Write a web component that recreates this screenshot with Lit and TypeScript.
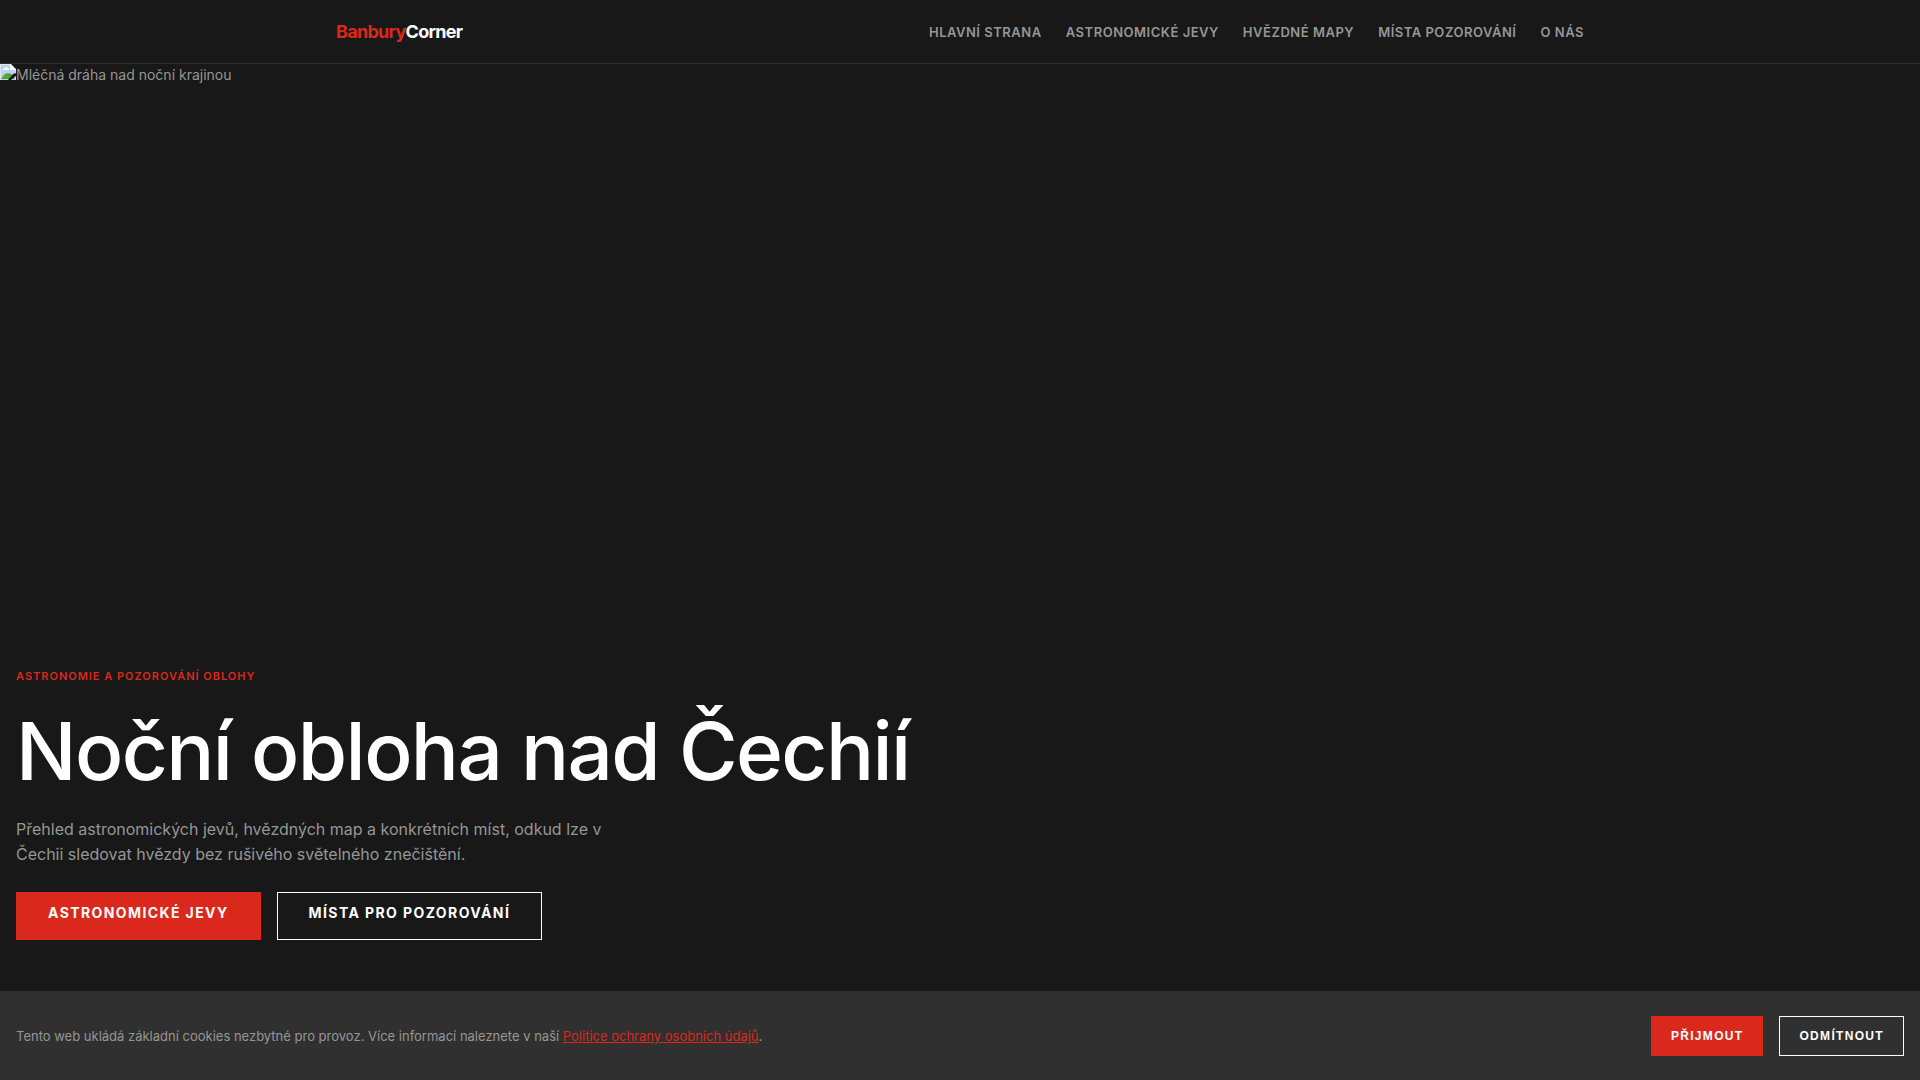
import { LitElement, html, css } from "lit";
import { customElement } from "lit/decorators.js";

const NAV = [
  ["Hlavní strana", "#hlavni"],
  ["Astronomické jevy", "#jevy"],
  ["Hvězdné mapy", "#mapy"],
  ["Místa pozorování", "#mista"],
  ["O nás", "#o-nas"],
];

@customElement("app-root")
export class AppRoot extends LitElement {
  static styles = css`
    :host {
      --red: #da291c;
      --white: #ffffff;
      --muted: #969696;
      --panel: #303030;
      display: flex;
      flex-direction: column;
      min-height: 100vh;
      background: #181818;
      color: var(--muted);
      font-family: Inter, "Liberation Sans", sans-serif;
      font-size: 14px;
      line-height: 21px;
    }
    *,
    *::before {
      box-sizing: border-box;
    }
    a {
      text-decoration: none;
    }
    .header {
      border-bottom: 1px solid var(--panel);
    }
    .bar {
      display: flex;
      align-items: center;
      justify-content: space-between;
      max-width: 1280px;
      min-height: 63px;
      margin: 0 auto;
      padding: 0 16px;
    }
    .logo {
      color: var(--white);
      font-size: 18px;
      font-weight: 700;
      letter-spacing: -0.04em;
    }
    .logo-accent {
      color: var(--red);
    }
    .nav {
      display: flex;
      gap: 24px;
    }
    .nav-link {
      color: var(--muted);
      font-size: 13px;
      font-weight: 600;
      letter-spacing: 0.04em;
      line-height: 22px;
      text-transform: uppercase;
    }
    .hero {
      display: flex;
      flex: 1;
      flex-direction: column;
      justify-content: space-between;
    }
    .picture {
      display: flex;
      align-items: flex-start;
    }
    .picture-icon {
      flex: none;
      width: 16px;
      height: 16px;
    }
    .content {
      padding: 0 16px 51px;
    }
    .eyebrow {
      margin: 0 0 24px;
      color: var(--red);
      font-size: 11px;
      font-weight: 600;
      letter-spacing: 0.09em;
      line-height: 18px;
      text-transform: uppercase;
    }
    .title {
      margin: 0 0 24px;
      color: var(--white);
      font-size: 80px;
      font-weight: 500;
      letter-spacing: -0.02em;
      line-height: 84px;
    }
    .lead {
      max-width: 600px;
      margin: 0 0 25px;
      font-size: 16px;
      line-height: 25px;
    }
    .actions {
      display: flex;
      flex-wrap: wrap;
      gap: 16px;
    }
    .button {
      min-height: 48px;
      padding: 9px 31px;
      border: 1px solid var(--white);
      background: transparent;
      color: var(--white);
      font-family: inherit;
      font-size: 14px;
      font-weight: 700;
      letter-spacing: 0.1em;
      line-height: 21px;
      text-transform: uppercase;
    }
    .primary {
      border-color: var(--red);
      background: var(--red);
    }
    .small {
      min-height: 40px;
      padding: 0 19px;
      font-family: "Liberation Sans", Arial, sans-serif;
      font-size: 12px;
      letter-spacing: 0.11em;
      cursor: pointer;
    }
    .cookies {
      display: flex;
      flex-wrap: wrap;
      align-items: center;
      justify-content: space-between;
      gap: 16px;
      padding: 25px 16px 24px;
      background: var(--panel);
    }
    .cookie-text {
      margin: 0;
      font-size: 13px;
      line-height: 20px;
    }
    .cookie-link {
      color: var(--red);
      text-decoration: underline;
    }
  `;

  render() {
    return html`
      <header class="header">
        <div class="bar">
          <a class="logo" href="#hlavni"><span class="logo-accent">Banbury</span>Corner</a>
          <nav class="nav">
            ${NAV.map(([label, href]) => html`<a class="nav-link" href=${href}>${label}</a>`)}
          </nav>
        </div>
      </header>
      <main class="hero">
        <div class="picture">
          <svg class="picture-icon" viewBox="0 0 16 16" aria-hidden="true">
            <path d="M0 0H11L16 5V16H0Z" fill="#e4e6ea" />
            <path d="M1 1H10V6H15V16H1Z" fill="#bcd2f7" />
            <path d="M3 6Q3 4 5 4Q6 2 8 4Q9 4 9 6Z" fill="#fff" />
            <path d="M1 15Q4 9 8 9Q12 9 15 15Z" fill="#50a933" />
            <path d="M10 0L16 6H10Z" fill="#fff" />
            <path d="M16 9L13 10L8 16H11L16 12Z" fill="#181818" />
          </svg>
          <span>Mléčná dráha nad noční krajinou</span>
        </div>
        <section class="content">
          <p class="eyebrow">Astronomie a pozorování oblohy</p>
          <h1 class="title">Noční obloha nad Čechií</h1>
          <p class="lead">
            Přehled astronomických jevů, hvězdných map a konkrétních míst, odkud lze v Čechii
            sledovat hvězdy bez rušivého světelného znečištění.
          </p>
          <div class="actions">
            <a class="button primary" href="#jevy">Astronomické jevy</a>
            <a class="button" href="#mista">Místa pro pozorování</a>
          </div>
        </section>
      </main>
      <aside class="cookies" aria-label="Cookies">
        <p class="cookie-text">
          Tento web ukládá základní cookies nezbytné pro provoz. Více informací naleznete v naší
          <a class="cookie-link" href="#soukromi">Politice ochrany osobních údajů</a>.
        </p>
        <div class="actions">
          <button class="button small primary" type="button">Přijmout</button>
          <button class="button small" type="button">Odmítnout</button>
        </div>
      </aside>
    `;
  }
}
